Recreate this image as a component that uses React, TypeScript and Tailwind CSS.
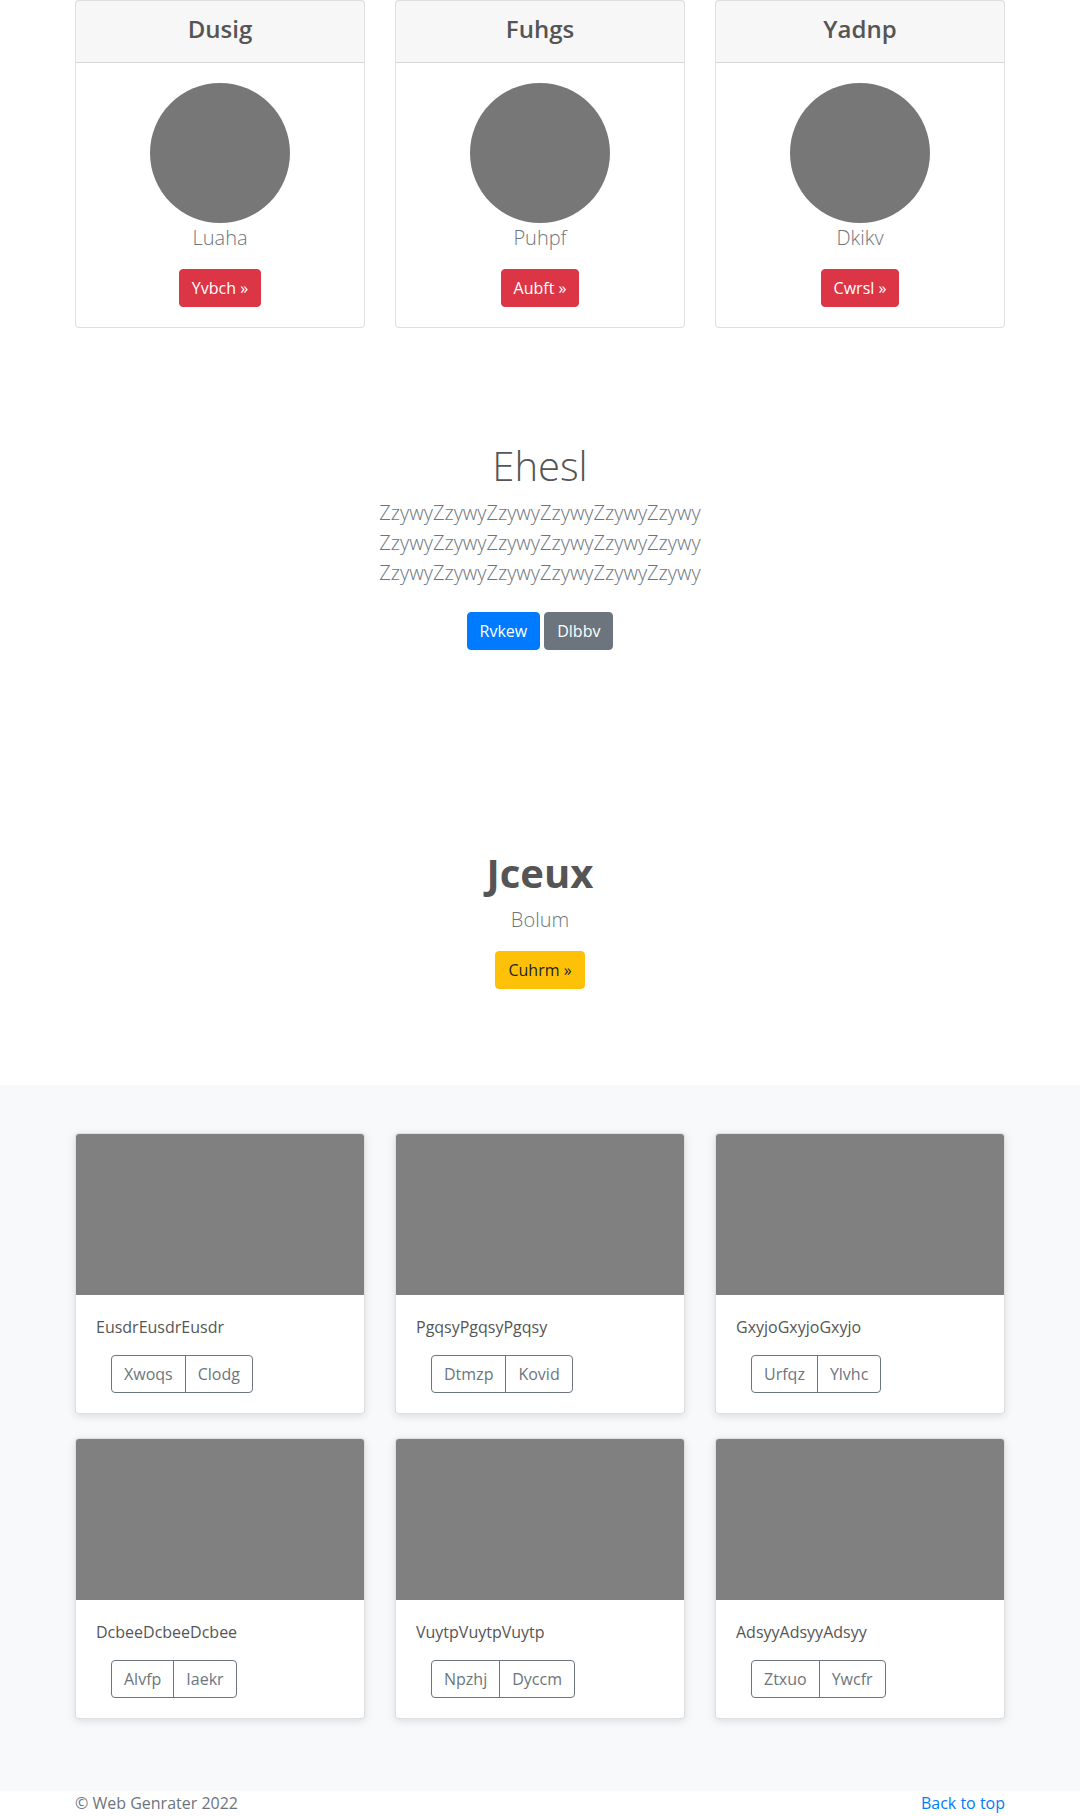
import React from 'react';

const teams = [
  { title: 'Dusig', name: 'Luaha', action: 'Yvbch' },
  { title: 'Fuhgs', name: 'Puhpf', action: 'Aubft' },
  { title: 'Yadnp', name: 'Dkikv', action: 'Cwrsl' },
];

const albums = [
  { text: 'EusdrEusdrEusdr', left: 'Xwoqs', right: 'Clodg' },
  { text: 'PgqsyPgqsyPgqsy', left: 'Dtmzp', right: 'Kovid' },
  { text: 'GxyjoGxyjoGxyjo', left: 'Urfqz', right: 'Ylvhc' },
  { text: 'DcbeeDcbeeDcbee', left: 'Alvfp', right: 'Iaekr' },
  { text: 'VuytpVuytpVuytp', left: 'Npzhj', right: 'Dyccm' },
  { text: 'AdsyyAdsyyAdsyy', left: 'Ztxuo', right: 'Ywcfr' },
];

const TeamCard: React.FC<{ title: string; name: string; action: string }> = ({ title, name, action }) => (
  <div className="border border-[rgba(0,0,0,0.125)] rounded-[4px] bg-white text-center">
    <div className="bg-[rgba(0,0,0,0.03)] border-b border-[rgba(0,0,0,0.125)] px-5 pt-[14px] pb-[10px]">
      <h4 className="text-[24px] font-semibold leading-[1.2] mb-2 text-[#555]">{title}</h4>
    </div>
    <div className="p-5">
      <div className="w-[140px] h-[140px] rounded-full bg-[#777] mx-auto" />
      <p className="text-[20px] font-light leading-[30px] mb-4 text-[#6c757d]">{name}</p>
      <a className="inline-block bg-[#dc3545] border border-[#dc3545] text-white text-[16px] leading-[24px] px-3 py-[6px] rounded-[4px]">
        {action} »
      </a>
    </div>
  </div>
);

const AlbumCard: React.FC<{ text: string; left: string; right: string }> = ({ text, left, right }) => (
  <div className="bg-white border border-[rgba(0,0,0,0.125)] rounded-[4px] shadow-[0_2px_8px_rgba(0,0,0,0.12)] overflow-hidden">
    <div className="h-[161px] bg-[#808080]" />
    <div className="p-5">
      <p className="text-[16px] leading-[24px] mb-4 text-[#555]">{text}</p>
      <div className="flex ml-[15px]">
        <button className="border border-[#6c757d] text-[#6c757d] text-[16px] leading-[24px] px-3 py-[6px] rounded-l-[4px]">
          {left}
        </button>
        <button className="-ml-px border border-[#6c757d] text-[#6c757d] text-[16px] leading-[24px] px-3 py-[6px] rounded-r-[4px]">
          {right}
        </button>
      </div>
    </div>
  </div>
);

const App: React.FC = () => {
  return (
    <div className="min-h-[1816px] bg-white font-['Open_Sans',sans-serif] text-[#555]">
      {/* top cards */}
      <div className="w-[960px] mx-auto px-[15px]">
        <div className="grid grid-cols-3 gap-[30px]">
          {teams.map((t) => (
            <TeamCard key={t.title} {...t} />
          ))}
        </div>
      </div>

      {/* intro */}
      <section className="pt-[114px] text-center">
        <h1 className="text-[40px] font-light leading-[1.2] mb-2 text-[#555]">Ehesl</h1>
        <p className="max-w-[360px] mx-auto text-[20px] font-light leading-[30px] mb-4 text-[#6c757d]">
          ZzywyZzywyZzywyZzywyZzywyZzywy ZzywyZzywyZzywyZzywyZzywyZzywy ZzywyZzywyZzywyZzywyZzywyZzywy
        </p>
        <div className="flex justify-center gap-1 pt-2">
          <a className="inline-block bg-[#007bff] border border-[#007bff] text-white text-[16px] leading-[24px] px-3 py-[6px] rounded-[4px]">
            Rvkew
          </a>
          <a className="inline-block bg-[#6c757d] border border-[#6c757d] text-white text-[16px] leading-[24px] px-3 py-[6px] rounded-[4px]">
            Dlbbv
          </a>
        </div>
      </section>

      {/* callout */}
      <section className="pt-[199px] pb-[96px] text-center">
        <h1 className="text-[40px] font-bold leading-[1.2] mb-2 text-[#555]">Jceux</h1>
        <p className="text-[20px] font-light leading-[30px] mb-4 text-[#6c757d]">Bolum</p>
        <a className="inline-block bg-[#ffc107] border border-[#ffc107] text-[#212529] text-[16px] leading-[24px] px-3 py-[6px] rounded-[4px]">
          Cuhrm »
        </a>
      </section>

      {/* album */}
      <section className="bg-[#f8f9fa] pt-12 pb-[72px]">
        <div className="w-[960px] mx-auto px-[15px]">
          <div className="grid grid-cols-3 gap-x-[30px] gap-y-6">
            {albums.map((a) => (
              <AlbumCard key={a.text} {...a} />
            ))}
          </div>
        </div>
      </section>

      <footer className="w-[960px] mx-auto px-[15px] pb-12 flex justify-between text-[16px] leading-[24px]">
        <p className="text-[#6c757d]">© Web Genrater 2022</p>
        <a className="text-[#007bff]">Back to top</a>
      </footer>
    </div>
  );
};

export default App;
